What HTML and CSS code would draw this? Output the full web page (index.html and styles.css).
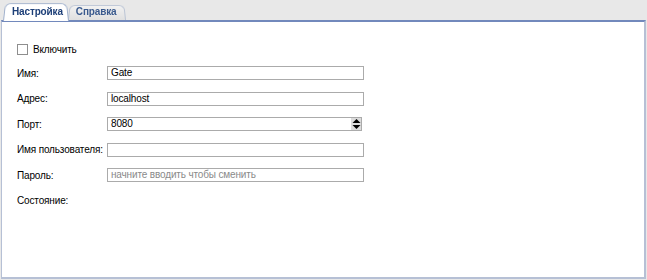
FILE: index.html
```html
<!DOCTYPE html>
<html lang="ru">
<head>
<meta charset="UTF-8">
<title>Настройка</title>
<link rel="stylesheet" href="styles.css">
</head>
<body>

<div class="tabs">
<div class="tab active">Настройка</div>
<div class="tab">Справка</div>
</div>

<div class="panel">

<label class="check">
<span class="box"></span>
Включить
</label>

<div class="form">
<div class="row">
<span class="lbl">Имя:</span>
<div class="field">Gate</div>
</div>
<div class="row">
<span class="lbl">Адрес:</span>
<div class="field">localhost</div>
</div>
<div class="row">
<span class="lbl">Порт:</span>
<div class="field spin">
<span>8080</span>
<span class="arrows">
<svg width="9" height="12" viewBox="0 0 9 12"><path d="M4.5 1 L8.5 5 L0.5 5 Z M4.5 11 L8.5 7 L0.5 7 Z" fill="#000"/></svg>
</span>
</div>
</div>
<div class="row">
<span class="lbl">Имя пользователя:</span>
<div class="field"></div>
</div>
<div class="row">
<span class="lbl">Пароль:</span>
<div class="field hint">начните вводить чтобы сменить</div>
</div>
<div class="row">
<span class="lbl">Состояние:</span>
</div>
</div>

</div>

</body>
</html>
```

FILE: styles.css
```css
body{
    margin:0;
    height:280px;
    background:#e8e8e8;
    font-family:"Liberation Sans", Arial, sans-serif;
    font-size:10px;
    letter-spacing:-0.15px;
    color:#000;
    display:flex;
    flex-direction:column;
}

.tabs{
    display:flex;
    height:20px;
    padding-left:3px;
    align-items:flex-end;
}

.tab{
    position:relative;
    height:16px;
    line-height:16px;
    font-weight:bold;
    color:#3a5a8e;
    z-index:1;
}

.tab::before{
    content:"";
    position:absolute;
    inset:0;
    background:linear-gradient(#f2f2f2,#e0e0e0);
    border:1px solid #b9c3d4;
    border-bottom:none;
    border-radius:6px 6px 0 0;
    transform:perspective(30px) rotateX(6deg);
    transform-origin:bottom;
    z-index:-1;
}

.tab.active{
    height:19px;
    line-height:19px;
    padding:0 6px 0 9px;
    color:#1d3f78;
    z-index:2;
    margin-bottom:-1px;
}

.tab.active::before{
    background:#fff;
    border-color:#9fb0cc;
}

.tab + .tab{
    margin-left:-1px;
    padding:0 9px 0 8px;
}

.panel{
    flex:1;
    margin:0 1px 1px 1px;
    background:#fff;
    border:2px solid #b6c0d5;
    border-top:2px solid #7289bc;
    border-left-width:1px;
    padding:21px 0 0 15px;
}

.check{
    display:flex;
    align-items:center;
    gap:5px;
    height:12px;
}

.box{
    width:9px;
    height:9px;
    border:1px solid #8e8e8e;
    background:#fff;
}

.form{
    margin-top:11px;
    display:flex;
    flex-direction:column;
    gap:11.5px;
}

.row{
    display:flex;
    align-items:center;
    height:14px;
}

.lbl{
    width:90px;
    flex-shrink:0;
    white-space:nowrap;
}

.field{
    width:250px;
    height:12px;
    border:1px solid #ababab;
    padding:0 2px 0 3px;
    line-height:12px;
    background:#fff;
}

.spin{
    display:flex;
    justify-content:space-between;
    align-items:center;
    padding-right:0;
}

.arrows{
    width:10px;
    height:12px;
    background:#dcdcdc;
    display:flex;
    align-items:center;
    justify-content:center;
}

.hint{
    color:#8a8a8a;
}
```
